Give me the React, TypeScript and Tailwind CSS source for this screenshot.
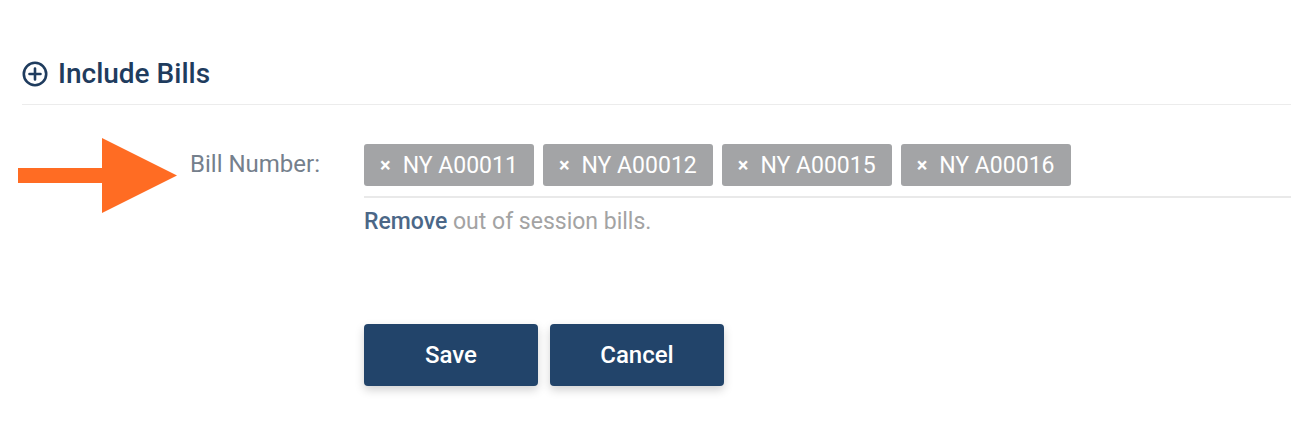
import { useState } from "react";

const FONT = { fontFamily: "Roboto, 'Liberation Sans', sans-serif" };

const App = () => {
  const [bills, setBills] = useState(["NY A00011", "NY A00012", "NY A00015", "NY A00016"]);

  return (
    <div className="relative min-h-screen bg-white pl-[22px]" style={FONT}>
      {/* Header */}
      <div className="flex items-center gap-[10px] border-b border-[#ececec] pt-[56px] pb-[12px]">
        <svg width="26" height="26" viewBox="0 0 26 26" fill="none" className="shrink-0">
          <circle cx="13" cy="13" r="11.2" stroke="#1f3c5e" strokeWidth="2.6" />
          <path d="M13 7.5v11M7.5 13h11" stroke="#1f3c5e" strokeWidth="2.6" strokeLinecap="round" />
        </svg>
        <h2 className="text-[28px] leading-[36px] font-medium text-[#1f3c5e]">Include Bills</h2>
      </div>

      {/* Bill number row */}
      <div className="mt-[39px] flex items-start">
        <div className="w-[342px] shrink-0 pr-[44px] h-[40px] flex items-center justify-end">
          <span className="text-[24px] text-[#75808c]">Bill Number:</span>
        </div>
        <div className="flex-1">
          <div className="flex flex-wrap gap-[9px] border-b-2 border-[#e9e9e9] pb-[10px]">
            {bills.map((b) => (
              <button
                key={b}
                onClick={() => setBills(bills.filter((x) => x !== b))}
                className="h-[42px] flex items-center rounded-[3px] bg-[#a3a4a6] pl-[16px] pr-[16px] text-white"
              >
                <span className="text-[20px] font-bold leading-none mr-[12px]">×</span>
                <span className="text-[23px] leading-none">{b}</span>
              </button>
            ))}
          </div>
          <p className="mt-[8px] text-[23px] leading-[32px] text-[#a3a3a3]">
            <span className="font-medium text-[#4b6787]">Remove</span> out of session bills.
          </p>

          <div className="mt-[86px] flex gap-[12px]">
            <button className="w-[174px] h-[62px] rounded-[4px] bg-[#22446a] text-[24px] font-medium text-white shadow-[0_4px_10px_rgba(0,0,0,0.18)]">
              Save
            </button>
            <button className="w-[174px] h-[62px] rounded-[4px] bg-[#22446a] text-[24px] font-medium text-white shadow-[0_4px_10px_rgba(0,0,0,0.18)]">
              Cancel
            </button>
          </div>
        </div>
      </div>

      {/* Annotation arrow */}
      <svg
        className="absolute left-[18px] top-[138px]"
        width="159"
        height="75"
        viewBox="0 0 159 75"
      >
        <rect x="0" y="30" width="88" height="15" fill="#ff6c23" />
        <polygon points="84,0 159,37.5 84,75" fill="#ff6c23" />
      </svg>
    </div>
  );
};

export default App;
